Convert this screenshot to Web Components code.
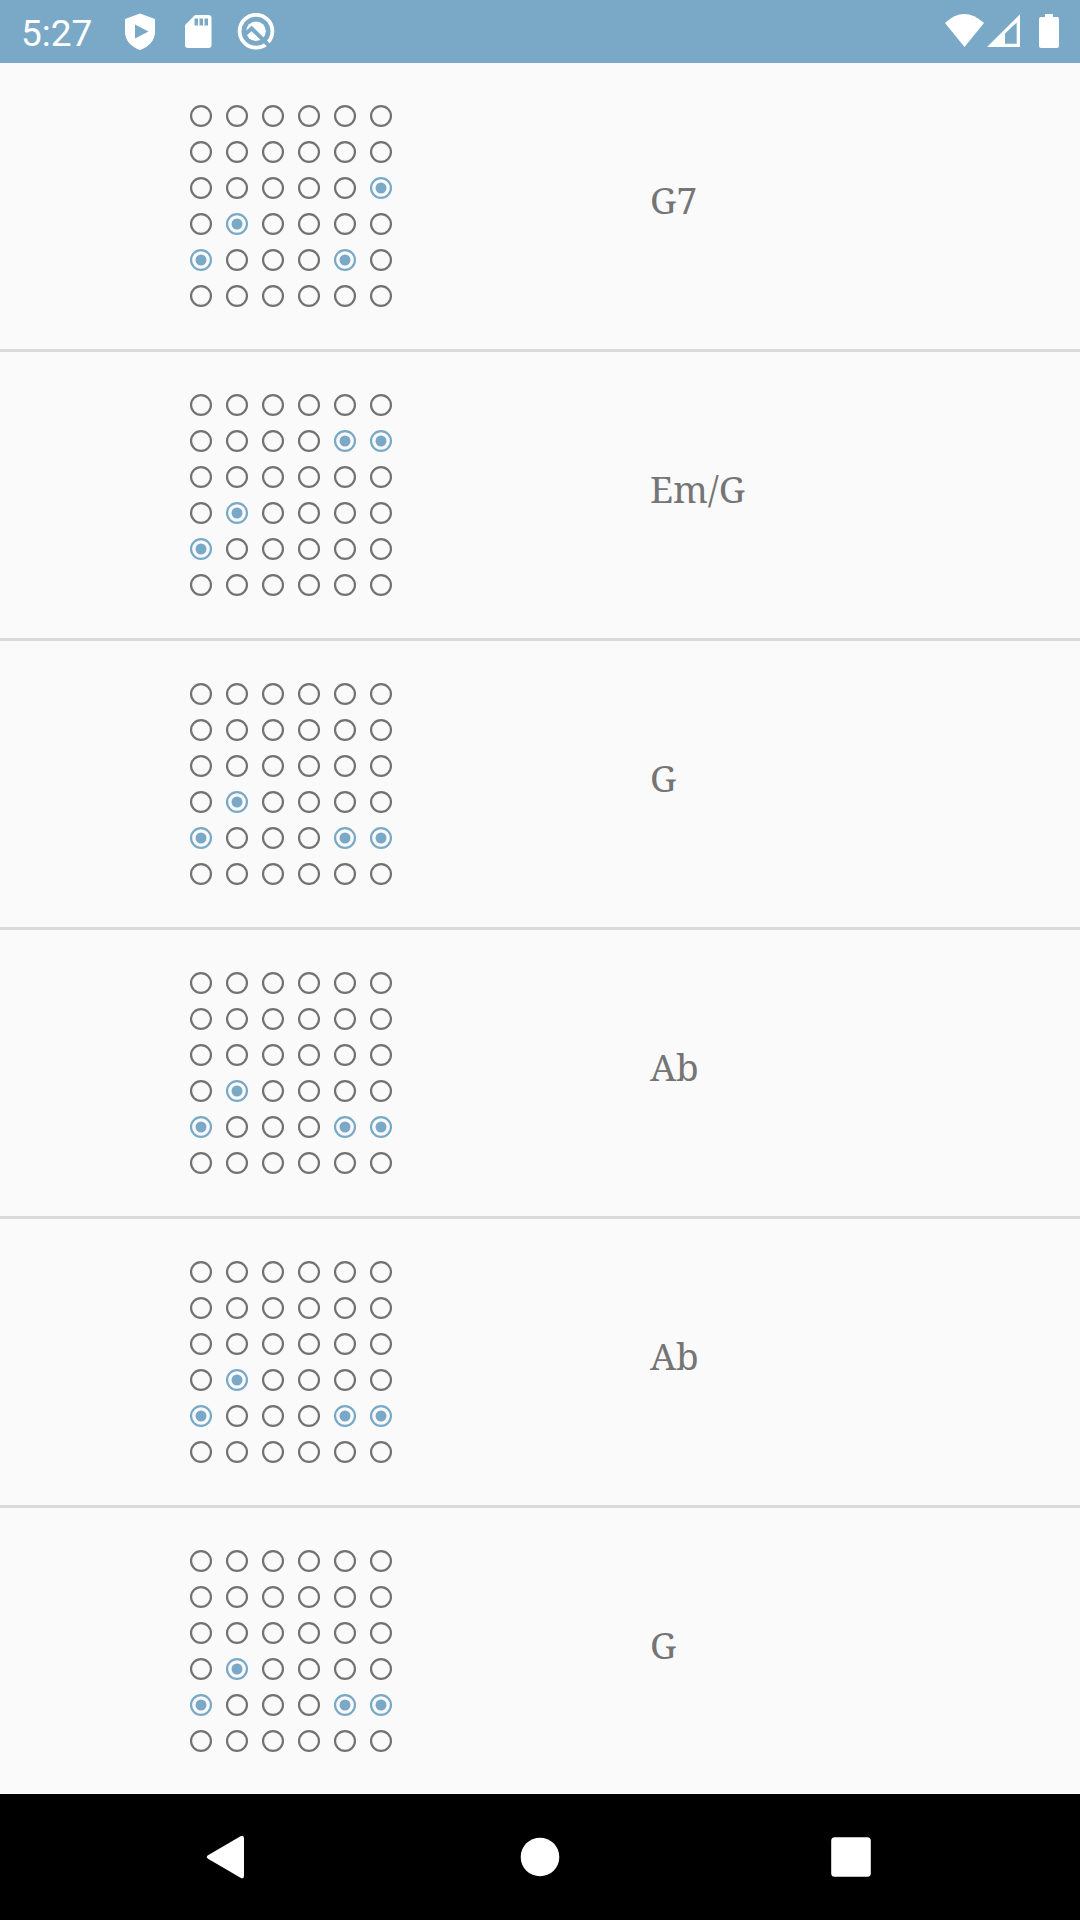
<!DOCTYPE html>
<html lang="en"><head><meta charset="utf-8"><title>Chords</title>
<style>body{margin:0;background:#fafafa}</style></head><body>
<chord-app></chord-app>
<script>
class Base extends HTMLElement{
  connectedCallback(){ if(!this.shadowRoot) this.attachShadow({mode:'open'}).innerHTML=this.view(); }
}
customElements.define('status-bar',class extends Base{view(){return `
<style>
:host{display:flex;justify-content:space-between;height:63px;background:#7aa9c8;color:#fff;font:37px/68px Roboto,sans-serif}
div{display:flex;height:63px}svg{display:block;fill:#fff}.time{width:99px;padding-left:21px}
</style>
<div><span class="time">5:27</span>
<svg width="180" height="63" viewBox="120 0 180 63">
<path fill-rule="evenodd" d="M140 13.5L155 19V32C155 40 149 47 140 50C131 47 125 40 125 32V19ZM135 24.5V38.5L148.5 31.5Z"/>
<path fill-rule="evenodd" d="M195 15H208.5Q211.5 15 211.5 18V45Q211.5 48 208.5 48H188Q185 48 185 45V25ZM194.5 18.500V25.500H198V18.500ZM199.500 18.500V25.500H203V18.500ZM204.500 18.500V25.500H208V18.500Z"/>
<circle cx="256" cy="31.200" r="16.400" fill="none" stroke="#fff" stroke-width="3.800"/>
<circle cx="256" cy="31.300" r="9.800"/>
<path d="M245.500 33.700L251.700 28.500L272 48.500" fill="none" stroke="#7aa9c8" stroke-width="4"/>
</svg></div>
<svg width="160" height="63" viewBox="920 0 160 63">
<path d="M945 23Q964 5 984 23L964.500 47Z"/>
<path fill-rule="evenodd" d="M987 47L1020 14.300V47ZM1005 43.700H1016.700V22.500L1005 33.500Z"/>
<path d="M1045 14H1053V17H1057Q1059 17 1059 19V46Q1059 48 1057 48H1041Q1039 48 1039 46V19Q1039 17 1041 17H1045Z"/>
</svg>`}});
customElements.define('fret-dot',class extends Base{view(){return `
<style>:host{display:block;width:36px;height:36px;color:#727272}:host([checked]){color:#7aa9c8}
svg{display:block}.in{visibility:hidden}:host([checked]) .in{visibility:visible}</style>
<svg width="36" height="36"><circle cx="18" cy="18" r="9.950" fill="none" stroke="currentColor" stroke-width="2.200"/><circle class="in" cx="18" cy="18" r="5.500" fill="currentColor"/></svg>`}});
customElements.define('chord-grid',class extends Base{view(){
const on=this.getAttribute('frets').split(' ');let s='';
for(let r=0;r<6;r++)for(let c=0;c<6;c++)s+=`<fret-dot${on.includes(''+r+c)?' checked':''}></fret-dot>`;
return `<style>:host{display:grid;grid-template-columns:repeat(6,36px);width:216px}</style>${s}`}});
customElements.define('chord-row',class extends Base{view(){return `
<style>:host{display:flex;align-items:center;box-sizing:border-box;height:289px;padding:0 0 3px 183px;background:linear-gradient(#dadada,#dadada) 0 286px/100% 3px no-repeat}
:host(:last-child){height:286px;padding-bottom:0;background:none}
.name{margin-left:251px;padding-bottom:12px;color:#757575;font:37px/50px "Noto Serif","Droid Serif","DejaVu Serif Condensed","DejaVu Serif",serif}</style>
<chord-grid frets="${this.getAttribute('frets')}"></chord-grid><span class="name"><slot></slot></span>`}});
customElements.define('nav-bar',class extends Base{view(){return `
<style>:host{display:flex;height:126px;background:#000}svg{display:block}</style>
<svg width="1080" height="126" viewBox="0 1794 1080 126" fill="#fff">
<path d="M208 1855.300L240.500 1836.300Q244 1834.500 244 1838.500V1875.500Q244 1879.500 240.500 1877.700L208 1858.700Q205.500 1857 208 1855.300Z"/>
<circle cx="540" cy="1857" r="19.300"/><rect x="831.200" y="1837.200" width="39.600" height="39.600" rx="3.500"/></svg>`}});
customElements.define('chord-app',class extends Base{view(){return `
<style>:host{display:flex;flex-direction:column;width:1080px;height:1920px;background:#fafafa}main{flex:1}</style>
<status-bar></status-bar><main>
<chord-row frets="25 31 40 44">G7</chord-row>
<chord-row frets="14 15 31 40">Em/G</chord-row>
<chord-row frets="31 40 44 45">G</chord-row>
<chord-row frets="31 40 44 45">Ab</chord-row>
<chord-row frets="31 40 44 45">Ab</chord-row>
<chord-row frets="31 40 44 45">G</chord-row>
</main><nav-bar></nav-bar>`}});
</script></body></html>
